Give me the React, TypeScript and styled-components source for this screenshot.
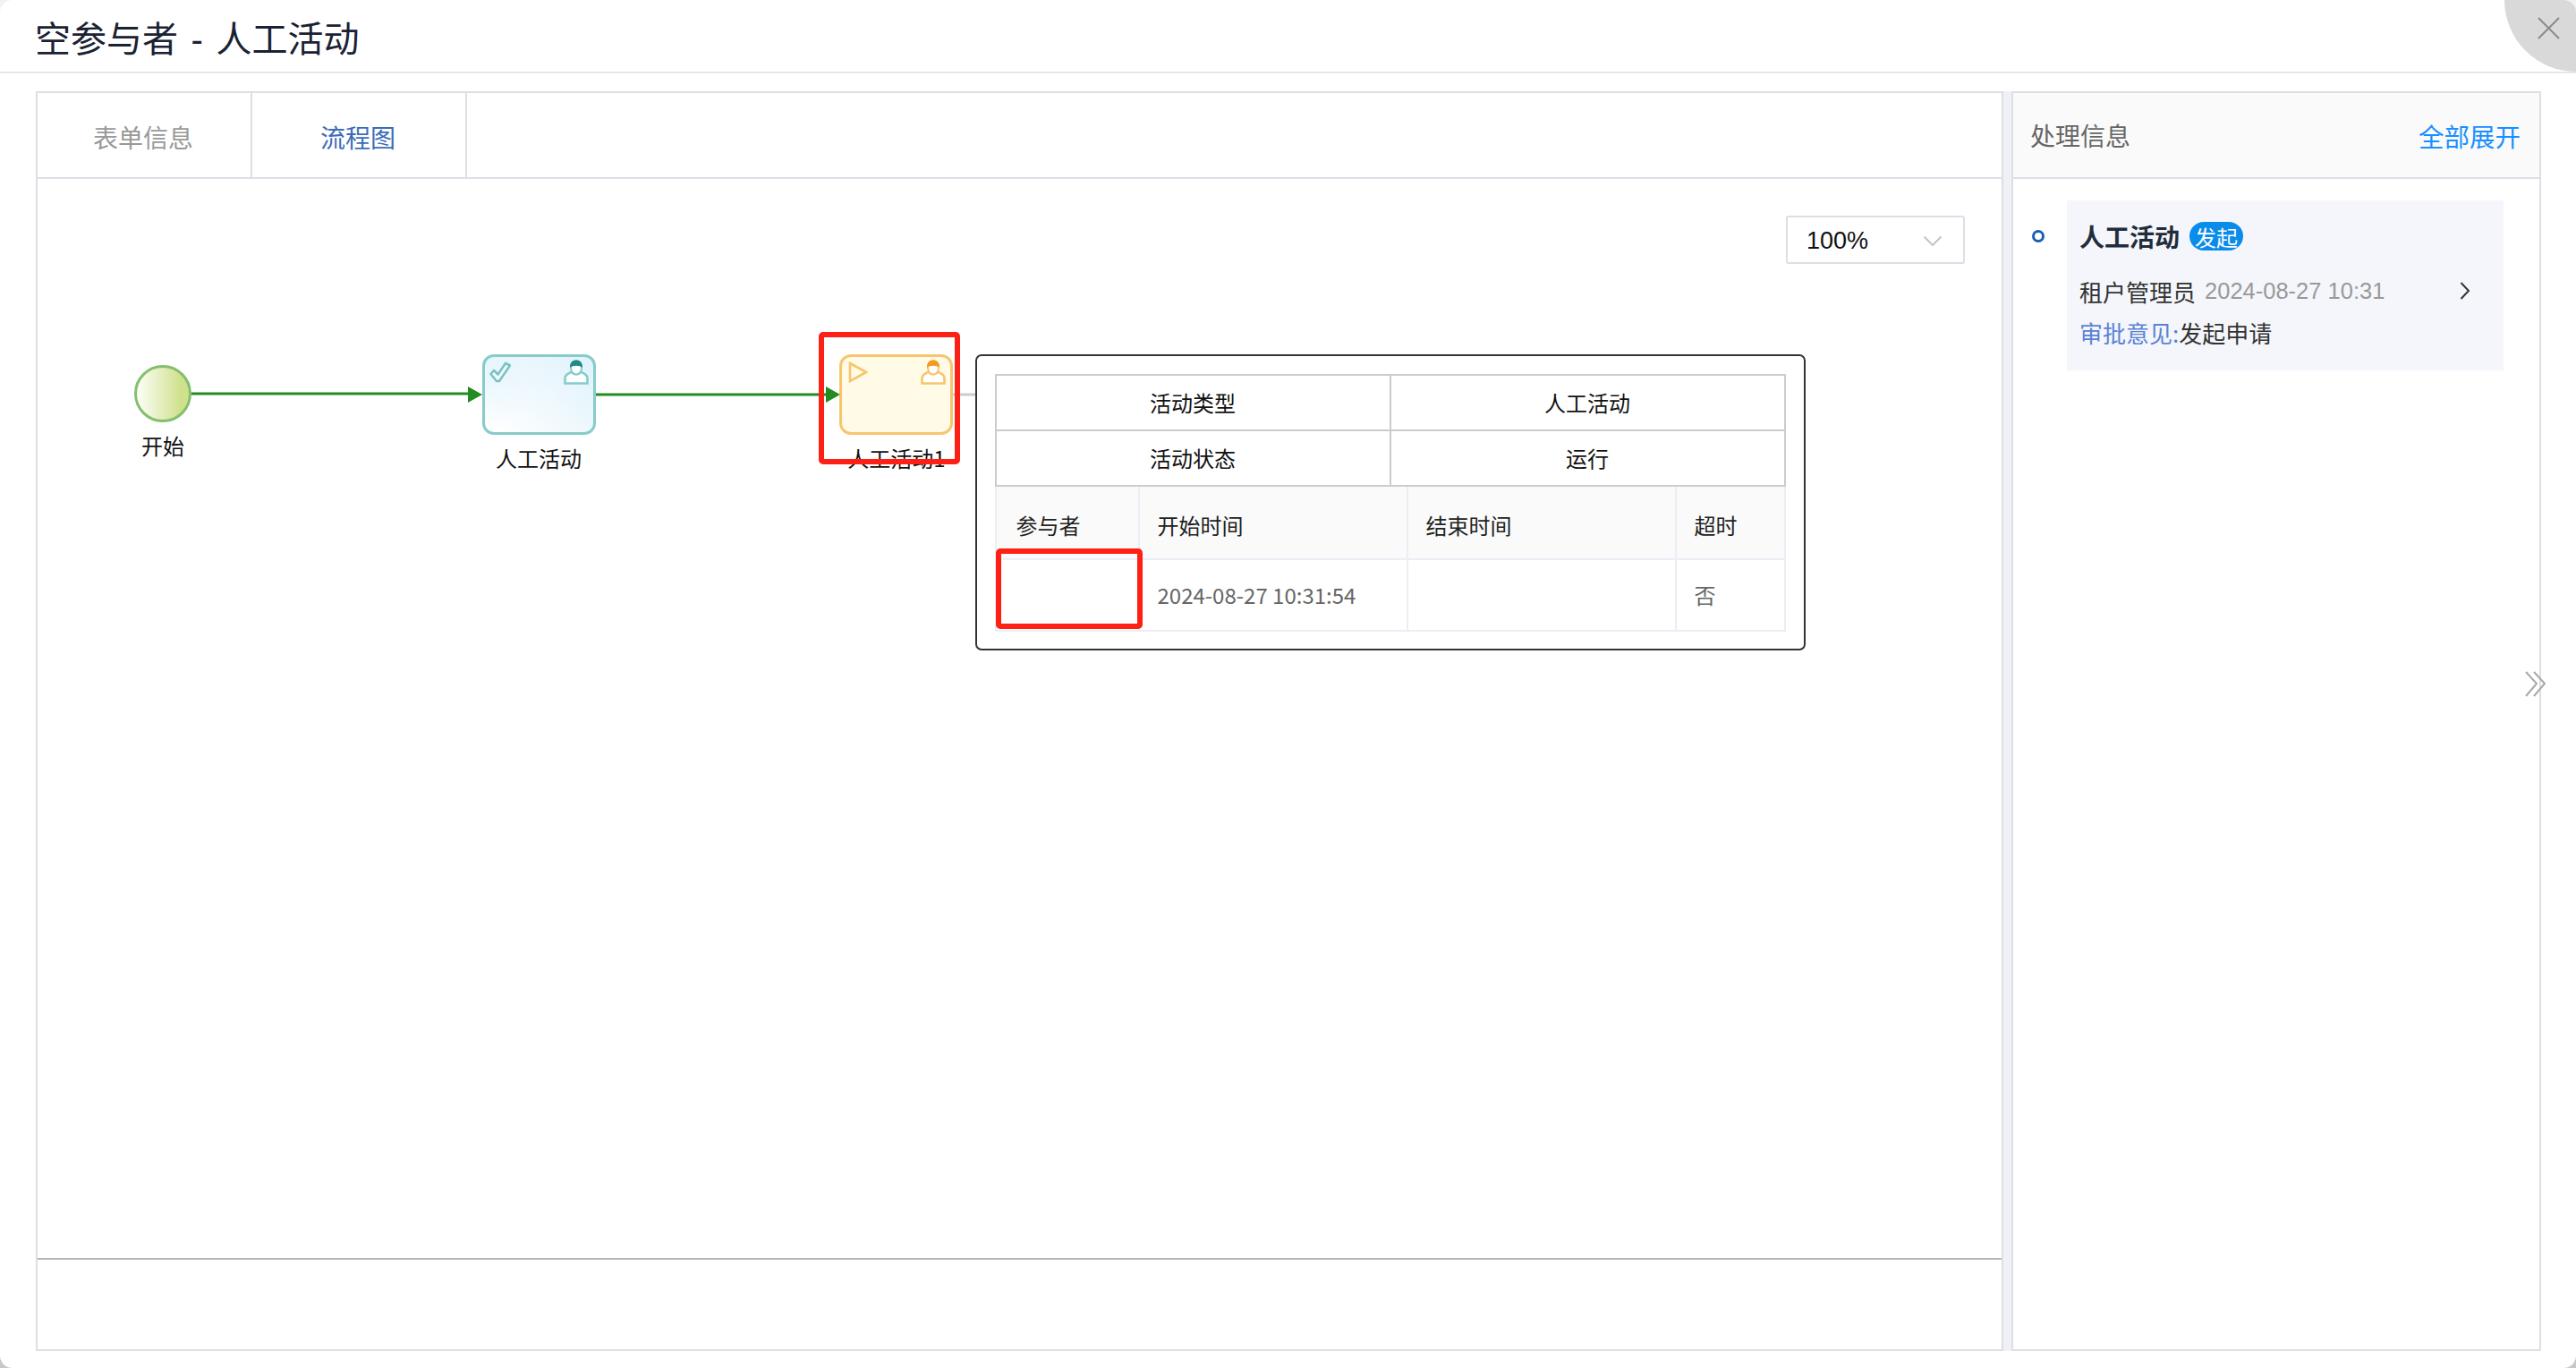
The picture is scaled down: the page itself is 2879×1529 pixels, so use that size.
import React from "react";
import styled, { createGlobalStyle } from "styled-components";

const GlobalStyle = createGlobalStyle`
  html, body { margin: 0; padding: 0; background: linear-gradient(to bottom, #f2f2f2 0, #f2f2f2 700px, #c8c8c8 1529px); }
  * { box-sizing: border-box; }
  body { font-family: "Noto Sans CJK SC", "Liberation Sans", sans-serif; }
`;

const Modal = styled.div`
  position: relative;
  width: 2879px;
  height: 1529px;
  background: #fff;
  border-radius: 14px;
  overflow: hidden;
  display: flex;
  flex-direction: column;
`;
const Header = styled.header`
  height: 82px;
  flex: none;
  padding: 8px 39px 0;
  display: flex;
  align-items: center;
  border-bottom: 2px solid #e8e8e8;
`;
const Title = styled.h1`
  margin: 0;
  font: 400 40px/1 "Liberation Sans", "Noto Sans CJK SC", sans-serif;
  word-spacing: 3.5px;
  color: #1a2233;
`;
const CloseCorner = styled.button`
  position: absolute;
  top: -80px;
  right: -80px;
  width: 160px;
  height: 160px;
  border: none;
  padding: 0;
  border-radius: 50%;
  background: #d9d9d9;
`;
const CloseIcon = styled.svg`
  position: absolute;
  left: 37px;
  top: 99px;
  width: 25px;
  height: 25px;
`;
const Content = styled.main`
  flex: 1;
  min-height: 0;
  display: flex;
  padding: 20px 39px 19px 40px;
`;
const MainPanel = styled.section`
  flex: 1;
  min-width: 0;
  display: flex;
  flex-direction: column;
  border: 2px solid #dcdfe6;
`;
const Tabs = styled.nav`
  height: 96px;
  flex: none;
  display: flex;
  border-bottom: 2px solid #dcdfe6;
`;
const Tab = styled.div<{ $active?: boolean; $w: number }>`
  width: ${(p) => p.$w}px;
  display: flex;
  align-items: center;
  justify-content: center;
  border-right: 2px solid #dcdfe6;
  font-size: 28px;
  padding: 3px 2px 0 0;
  color: ${(p) => (p.$active ? "#3b6cb8" : "#999")};
`;
const Canvas = styled.div`
  position: relative;
  flex: 1;
  min-height: 0;
`;
const Footer = styled.div`
  height: 102px;
  flex: none;
  border-top: 2px solid #b5b5b5;
`;
const ZoomSelect = styled.div`
  position: absolute;
  left: 1954px;
  top: 41px;
  width: 200px;
  height: 54px;
  border: 2px solid #dcdfe6;
  border-radius: 3px;
  display: flex;
  align-items: center;
  justify-content: space-between;
  padding: 3px 24px 0 21px;
  font: 27px/1 "Liberation Sans", sans-serif;
  color: #111;
`;
const Connections = styled.svg`
  position: absolute;
  inset: 0;
  width: 100%;
  height: 100%;
`;
const StartEvent = styled.div`
  position: absolute;
  left: 108px;
  top: 208px;
  width: 64px;
  height: 64px;
  border-radius: 50%;
  border: 3px solid #84bf6e;
  background: linear-gradient(to right, #fdfef8 0%, #cfe18c 85%);
`;
const Task = styled.div<{ $x: number; $run?: boolean }>`
  position: absolute;
  left: ${(p) => p.$x}px;
  top: 196px;
  width: 127px;
  height: 90px;
  border-radius: 13px;
  border: 3px solid ${(p) => (p.$run ? "#f8c56e" : "#87cbcb")};
  background: ${(p) =>
    p.$run
      ? "#fffbe6"
      : "radial-gradient(circle at 0 0, #e6f5fd 0%, transparent 55%), linear-gradient(45deg, #fff 5%, #dff2fb 100%)"};
`;
const StateIcon = styled.svg`
  position: absolute;
  left: 5px;
  top: 5px;
  width: 24px;
  height: 24px;
`;
const UserIcon = styled.svg`
  position: absolute;
  right: 5px;
  top: 3px;
  width: 28px;
  height: 28px;
`;
const NodeLabel = styled.div<{ $x: number; $y: number; $w: number }>`
  position: absolute;
  left: ${(p) => p.$x}px;
  top: ${(p) => p.$y}px;
  width: ${(p) => p.$w}px;
  text-align: center;
  font-size: 24px;
  line-height: 24px;
  color: #111;
  white-space: nowrap;
`;
const Popup = styled.div`
  position: absolute;
  left: 1048px;
  top: 196px;
  width: 928px;
  height: 331px;
  background: #fff;
  border: 2.5px solid #333;
  border-radius: 7px;
  padding: 19.5px;
`;
const InfoTable = styled.div`
  width: 884px;
  display: grid;
  grid-template-columns: 441px 439px;
  grid-auto-rows: 62px;
  border: 2px solid #ccc;
  border-bottom-width: 0;
`;
const InfoCell = styled.div<{ $last?: boolean }>`
  display: flex;
  align-items: center;
  justify-content: center;
  font-size: 24px;
  color: #111;
  border-bottom: 2px solid #ccc;
  border-right: ${(p) => (p.$last ? "none" : "2px solid #ccc")};
`;
const RecordTable = styled.div`
  width: 884px;
  display: grid;
  grid-template-columns: 160px 300px 300px 120px;
  grid-template-rows: 82px 80px;
  border-left: 2px solid #ebeef5;
  border-right: 2px solid #ebeef5;
`;
const RecordCell = styled.div<{ $head?: boolean; $last?: boolean; $first?: boolean }>`
  display: flex;
  align-items: center;
  padding-left: ${(p) => (p.$first ? "22px" : "20px")};
  padding-top: ${(p) => (p.$head ? "5px" : "0")};
  font-size: 24px;
  background: ${(p) => (p.$head ? "#fafafa" : "#fff")};
  color: ${(p) => (p.$head ? "#222" : "#666")};
  border-bottom: 2px solid #ebeef5;
  border-right: ${(p) => (p.$last ? "none" : "2px solid #ebeef5")};
`;
const Mark = styled.div<{ $x: number; $y: number; $w: number; $h: number }>`
  position: absolute;
  left: ${(p) => p.$x}px;
  top: ${(p) => p.$y}px;
  width: ${(p) => p.$w}px;
  height: ${(p) => p.$h}px;
  border: 6px solid #ff2015;
  border-radius: 5px;
`;
const Splitter = styled.div`
  width: 9px;
  flex: none;
  background: #f0f1f7;
`;
const SidePanel = styled.aside`
  width: 592px;
  flex: none;
  display: flex;
  flex-direction: column;
  border: 2px solid #dcdfe6;
`;
const SideHead = styled.div`
  height: 96px;
  flex: none;
  display: flex;
  align-items: center;
  justify-content: space-between;
  padding: 0 21px 0 19px;
  background: #fafafa;
  border-bottom: 2px solid #dcdfe6;
  font-size: 28px;
  color: #666;
`;
const ExpandLink = styled.span`
  color: #1890ff;
  font-size: 28.5px;
`;
const Timeline = styled.div`
  display: flex;
  align-items: flex-start;
  padding: 24px 40px 0 21px;
`;
const Dot = styled.span`
  flex: none;
  width: 14px;
  height: 14px;
  margin-top: 33px;
  margin-right: 25px;
  border-radius: 50%;
  border: 3px solid #1a5fb4;
`;
const Card = styled.div`
  flex: 1;
  height: 190px;
  background: #f4f6fb;
  padding: 24px 14px 0;
`;
const CardTitle = styled.div`
  display: flex;
  align-items: center;
  height: 32px;
  gap: 11px;
  font-size: 28px;
  font-weight: 700;
  color: #1f2d3d;
`;
const Badge = styled.span`
  width: 60px;
  height: 32px;
  border-radius: 16px;
  background: #0a8ceb;
  color: #fff;
  font-size: 24px;
  font-weight: 400;
  display: flex;
  align-items: center;
  justify-content: center;
`;
const MetaRow = styled.div`
  display: flex;
  align-items: center;
  height: 28px;
  margin-top: 31px;
  font-size: 26px;
  color: #333;
`;
const MetaTime = styled.span`
  margin-left: 10px;
  font-family: "Liberation Sans", sans-serif;
  font-size: 25.5px;
  color: #999;
`;
const Chevron = styled.svg`
  margin-left: auto;
  margin-right: 23px;
  width: 12px;
  height: 20px;
`;
const Opinion = styled.div`
  margin-top: 18px;
  font-size: 26px;
  line-height: 30px;
  color: #333;
`;
const OpinionLabel = styled.span`
  color: #5b82d6;
`;
const CollapseIcon = styled.svg`
  position: absolute;
  left: 2822px;
  top: 750px;
  width: 24px;
  height: 30px;
`;

const PersonGlyph = ({ color, cap }: { color: string; cap: string }) => (
  <UserIcon viewBox="0 0 28 28" fill="none">
    <path d="M1.5 26.5 V20.5 C1.5 17 5 15.5 9 13.5 C11 17 17 17 19 13.5 C23 15.5 26.5 17 26.5 20.5 V26.5 Z" fill="#fff" stroke={color} strokeWidth="2.6" />
    <ellipse cx="14" cy="9" rx="6" ry="7.5" fill="#fff" stroke={color} strokeWidth="2" />
    <path d="M7 9 C6.6 3 10 0.5 14 0.5 C18 0.5 21.4 3 21 9 C18.5 6 9.5 6 7 9 Z" fill={cap} />
  </UserIcon>
);

const Arrow = ({ x }: { x: number }) => (
  <path d={`M${x} 232 L${x + 16} 241 L${x} 250 Z`} fill="#228b22" />
);

export default function App() {
  return (
    <Modal>
      <GlobalStyle />
      <Header>
        <Title>空参与者 - 人工活动</Title>
      </Header>
      <CloseCorner aria-label="关闭">
        <CloseIcon viewBox="0 0 25 25">
          <path d="M1 1 L24 24 M24 1 L1 24" stroke="#8a8a8a" strokeWidth="2" fill="none" />
        </CloseIcon>
      </CloseCorner>
      <Content>
        <MainPanel>
          <Tabs>
            <Tab $w={240}>表单信息</Tab>
            <Tab $w={240} $active>流程图</Tab>
          </Tabs>
          <Canvas>
            <ZoomSelect>
              100%
              <svg width="20" height="11" viewBox="0 0 20 11" fill="none">
                <path d="M0.5 0.5 L10 10 L19.5 0.5" stroke="#c0c4cc" strokeWidth="2" />
              </svg>
            </ZoomSelect>
            <Connections>
              <path d="M172 240 H482" stroke="#228b22" strokeWidth="3" fill="none" />
              <Arrow x={481} />
              <path d="M624 241 H882" stroke="#228b22" strokeWidth="3" fill="none" />
              <Arrow x={881} />
              <path d="M1023 241 H1050" stroke="#ccc" strokeWidth="3" fill="none" />
            </Connections>
            <StartEvent />
            <NodeLabel $x={100} $y={286} $w={80}>开始</NodeLabel>
            <Task $x={497}>
              <StateIcon viewBox="0 0 24 24" fill="none">
                <path d="M1.5 14 L5 10 L9.5 14.5 L18 2 L23 4.5 L11 22 L8 22 Z" fill="#f2fafd" stroke="#7cc2c2" strokeWidth="2.6" strokeLinejoin="round" />
              </StateIcon>
              <PersonGlyph color="#86cccc" cap="#1f8a8a" />
            </Task>
            <NodeLabel $x={490} $y={300} $w={140}>人工活动</NodeLabel>
            <Task $x={896} $run>
              <StateIcon viewBox="0 0 24 24" fill="none">
                <path d="M4 2 L22 12 L4 22 Z" fill="#fffbe6" stroke="#f8c56e" strokeWidth="2.6" />
              </StateIcon>
              <PersonGlyph color="#f8c56e" cap="#f59a1b" />
            </Task>
            <NodeLabel $x={880} $y={300} $w={160}>人工活动1</NodeLabel>
            <Popup>
              <InfoTable>
                <InfoCell>活动类型</InfoCell>
                <InfoCell $last>人工活动</InfoCell>
                <InfoCell>活动状态</InfoCell>
                <InfoCell $last>运行</InfoCell>
              </InfoTable>
              <RecordTable>
                <RecordCell $head $first>参与者</RecordCell>
                <RecordCell $head>开始时间</RecordCell>
                <RecordCell $head>结束时间</RecordCell>
                <RecordCell $head $last>超时</RecordCell>
                <RecordCell $first />
                <RecordCell>2024-08-27 10:31:54</RecordCell>
                <RecordCell />
                <RecordCell $last>否</RecordCell>
              </RecordTable>
            </Popup>
            <Mark $x={873} $y={171} $w={158} $h={148} />
            <Mark $x={1071} $y={413} $w={164} $h={90} />
          </Canvas>
          <Footer />
        </MainPanel>
        <Splitter />
        <SidePanel>
          <SideHead>
            处理信息
            <ExpandLink>全部展开</ExpandLink>
          </SideHead>
          <Timeline>
            <Dot />
            <Card>
              <CardTitle>
                人工活动
                <Badge>发起</Badge>
              </CardTitle>
              <MetaRow>
                租户管理员
                <MetaTime>2024-08-27 10:31</MetaTime>
                <Chevron viewBox="0 0 12 20" fill="none">
                  <path d="M1.5 1 L10 10 L1.5 19" stroke="#333" strokeWidth="2" />
                </Chevron>
              </MetaRow>
              <Opinion>
                <OpinionLabel>审批意见:</OpinionLabel>发起申请
              </Opinion>
            </Card>
          </Timeline>
        </SidePanel>
      </Content>
      <CollapseIcon viewBox="0 0 24 30" fill="none">
        <path d="M1 1 L13 14 L1 28 M10 1 L22 14 L10 28" stroke="#a8a8a8" strokeWidth="2" />
      </CollapseIcon>
    </Modal>
  );
}
